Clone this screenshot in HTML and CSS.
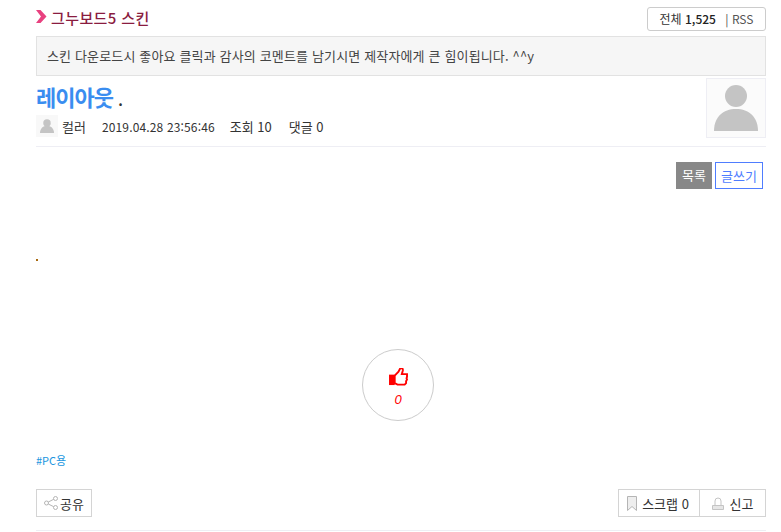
FILE: index.html
```html
<!DOCTYPE html>
<html lang="ko">
<head>
    <meta charset="UTF-8">
    <meta name="viewport" content="width=device-width, initial-scale=1.0">
    <title>레이아웃</title>
    <link rel="stylesheet" href="styles.css">
</head>
<body>
    <div class="board-head">
        <h2 class="board-title">
            <svg class="title-arrow" width="11" height="13" viewBox="0 0 11 13"><path d="M0 0h4.500l6 6.500-6 6.500H0l5-6.500z" fill="#e8417f"/></svg>
            그누보드5 스킨
        </h2>
        <div class="board-count">전체 <b>1,525</b> <span class="rss">| RSS</span></div>
    </div>

    <div class="notice">스킨 다운로드시 좋아요 클릭과 감사의 코멘트를 남기시면 제작자에게 큰 힘이됩니다. ^^y</div>

    <div class="post-head">
        <div class="post-info">
            <h1 class="post-title"><span class="subject">레이아웃</span> <span class="dot">.</span></h1>
            <div class="post-meta">
                <span class="meta-photo">
                    <svg width="14" height="16" viewBox="0 0 60 60"><circle cx="30" cy="17" r="16" fill="#c4c4c4"/><path d="M0 60c0-20 14-31 30-31s30 11 30 31z" fill="#c4c4c4"/></svg>
                </span>
                <span class="writer">컬러</span>
                <span class="date">2019.04.28 23:56:46</span>
                <span class="hit">조회 10</span>
                <span class="cmt">댓글 0</span>
            </div>
        </div>
        <div class="post-photo">
            <svg width="44" height="46" viewBox="0 0 44 46"><circle cx="22" cy="11" r="11" fill="#c4c4c4"/><path d="M0 46c0-14 9-22 22-22s22 8 22 22z" fill="#c4c4c4"/></svg>
        </div>
    </div>

    <div class="post-btns">
        <a class="btn btn-list">목록</a>
        <a class="btn btn-write">글쓰기</a>
    </div>

    <div class="post-body">
        <div class="content-dot"></div>
    </div>

    <div class="good-wrap">
        <div class="good">
            <svg width="19" height="18" viewBox="0 0 20 19">
                <rect x="0" y="7" width="6" height="11" fill="#f00"/>
                <path d="M6 8l4-4 2-4c2 0 3 1 2.500 3L13.500 6.500H19v2.500l-.5 2 .5 1-1 2v2l-1.500 1.500H9L6 16z" fill="#fff" stroke="#f00" stroke-width="2"/>
            </svg>
            <em>0</em>
        </div>
    </div>

    <div class="tags">#PC용</div>

    <div class="post-foot">
        <a class="foot-btn share">
            <svg width="14" height="14" viewBox="0 0 14 14" fill="none" stroke="#b5b5b5"><circle cx="2.500" cy="7" r="2"/><circle cx="11.500" cy="2.500" r="2"/><circle cx="11.500" cy="11.500" r="2"/><path d="M4.300 6l5.400-2.700M4.300 8l5.400 2.700"/></svg>
            공유
        </a>
        <div class="foot-group">
            <a class="foot-btn scrap">
                <svg width="10" height="15" viewBox="0 0 10 15" fill="#eee" stroke="#b5b5b5"><path d="M.5.500h9v14L5 10.500l-4.500 4z"/></svg>
                스크랩 0
            </a>
            <a class="foot-btn report">
                <svg width="12" height="13" viewBox="0 0 12 13" fill="none" stroke="#c4c4c4"><path d="M3 8V4a3 3 0 0 1 6 0v4"/><path d="M.5 8.500h11v4H.5z" fill="#e6e6e6"/></svg>
                신고
            </a>
        </div>
    </div>
</body>
</html>
```

FILE: styles.css
```css
body {
    margin: 0;
    padding: 7px 15px 0 36px;
    font-family: "Noto Sans CJK KR", "Noto Sans", sans-serif;
    font-size: 12px;
    color: #333;
    background: #fff;
}
a {
    color: inherit;
    text-decoration: none;
}
.board-head {
    display: flex;
    justify-content: space-between;
    align-items: center;
    height: 24px;
}
.board-title {
    display: flex;
    align-items: center;
    gap: 4px;
    margin: 0;
    padding-bottom: 3px;
    font-size: 15px;
    font-weight: 500;
    letter-spacing: 0.4px;
    color: #8a1c40;
    white-space: nowrap;
}
.title-arrow {
    margin-top: -2px;
}
.board-count {
    box-sizing: border-box;
    width: 119px;
    height: 24px;
    line-height: 22px;
    text-align: center;
    border: 1px solid #ccc;
    border-radius: 3px;
    color: #333;
}
.board-count b {
    font-weight: 500;
    color: #222;
}
.rss {
    margin-left: 6px;
    color: #555;
}
.notice {
    box-sizing: border-box;
    height: 40px;
    margin-top: 5px;
    padding: 0 10px;
    line-height: 38px;
    font-size: 13px;
    letter-spacing: 0.15px;
    color: #444;
    background: #f6f6f6;
    border: 1px solid #e2e2e2;
    white-space: nowrap;
}
.post-head {
    display: flex;
    justify-content: space-between;
    height: 68px;
    padding-top: 2px;
    border-bottom: 1px solid #eeeef4;
}
.post-title {
    height: 36px;
    margin: 0;
    font-size: 22px;
    font-weight: 700;
    line-height: 36px;
    letter-spacing: -1px;
}
.subject {
    color: #3a8df0;
}
.dot {
    font-size: 14px;
    color: #333;
}
.post-meta {
    display: flex;
    align-items: center;
    margin-top: 1px;
    font-size: 13px;
    color: #333;
}
.meta-photo {
    display: flex;
    align-items: center;
    justify-content: center;
    width: 22px;
    height: 22px;
    margin-right: 4px;
    background: #f8f8f8;
}
.writer {
    margin-right: 16px;
}
.date {
    margin-right: 15px;
    font-size: 12px;
    letter-spacing: 0.15px;
}
.hit {
    margin-right: 17px;
}
.post-photo {
    box-sizing: border-box;
    display: flex;
    align-items: flex-end;
    justify-content: center;
    width: 60px;
    height: 60px;
    padding-bottom: 6px;
    background: #fbfbfb;
    border: 1px solid #eeeef4;
}
.post-btns {
    display: flex;
    justify-content: flex-end;
    gap: 3px;
    margin-top: 15px;
    padding-right: 3px;
}
.btn {
    box-sizing: border-box;
    height: 27px;
    line-height: 25px;
    font-size: 13px;
    text-align: center;
}
.btn-list {
    width: 36px;
    color: #fff;
    background: #888;
}
.btn-write {
    width: 48px;
    color: #4f7dff;
    border: 1px solid #4f7dff;
}
.post-body {
    height: 160px;
    padding-top: 70px;
    box-sizing: border-box;
}
.content-dot {
    width: 2px;
    height: 2px;
    background: #a86a10;
}
.good-wrap {
    display: flex;
    justify-content: center;
    padding-right: 6px;
}
.good {
    box-sizing: border-box;
    display: flex;
    flex-direction: column;
    align-items: center;
    width: 72px;
    height: 72px;
    padding-top: 18px;
    border: 1px solid #ccc;
    border-radius: 50%;
}
.good em {
    margin-top: 6px;
    font-family: "Liberation Sans", sans-serif;
    font-size: 13px;
    line-height: 16px;
    color: #f00;
}
.tags {
    height: 16px;
    margin-top: 31px;
    font-size: 11px;
    line-height: 16px;
    color: #2196e0;
}
.post-foot {
    display: flex;
    justify-content: space-between;
    height: 41px;
    margin-top: 21px;
    border-bottom: 1px solid #eeeef4;
}
.foot-btn {
    box-sizing: border-box;
    display: flex;
    align-items: center;
    justify-content: center;
    gap: 4px;
    height: 28px;
    font-size: 13px;
    color: #333;
    border: 1px solid #d4d4d4;
}
.share {
    width: 56px;
    gap: 2px;
}
.foot-group {
    display: flex;
}
.scrap {
    width: 82px;
    gap: 5px;
    padding-right: 2px;
}
.report {
    width: 67px;
    margin-left: -1px;
    gap: 6px;
}
```
